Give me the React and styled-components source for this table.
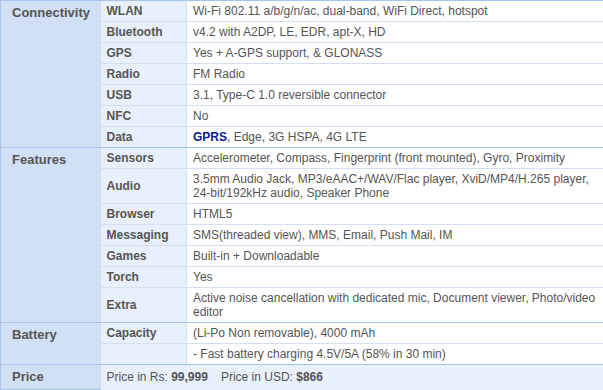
import React from "react";
import styled, { createGlobalStyle } from "styled-components";

const Global = createGlobalStyle`
  html, body { margin: 0; padding: 0; background: #ffffff; overflow: hidden; }
  body { font-family: "Liberation Sans", Arial, sans-serif; }
`;

const GROUP_LINE = "#a9c4ec";
const ROW_LINE = "#d3e0f3";

const Table = styled.table`
  border-collapse: collapse;
  table-layout: fixed;
  width: 610px;
  border-top: 1px solid ${GROUP_LINE};
  border-left: 1px solid ${GROUP_LINE};
  color: #545454;
`;

const CatCell = styled.th`
  background: #d1e0f4;
  text-align: left;
  vertical-align: top;
  font-size: 13px;
  font-weight: bold;
  line-height: 16px;
  padding: 4px 6px 4px 11px;
  border-bottom: 1px solid ${GROUP_LINE};
  color: #555;
`;

const LabelCell = styled.td`
  background: #e8f0fb;
  font-size: 12px;
  font-weight: bold;
  line-height: 14px;
  padding: 3px 6px;
  border-bottom: 1px solid ${(p) => (p.$end ? GROUP_LINE : ROW_LINE)};
  color: #555;
`;

const ValueCell = styled.td`
  background: #ffffff;
  font-size: 12px;
  line-height: 14px;
  padding: 3px 4px 3px 6px;
  border-left: 1px solid ${ROW_LINE};
  border-bottom: 1px solid ${(p) => (p.$end ? GROUP_LINE : ROW_LINE)};
  color: #555;
`;

const PriceCell = styled.td`
  background: #e8f0fb;
  font-size: 12px;
  line-height: 14px;
  padding: 5px 6px;
  color: #555;
`;

const Strong = styled.b`
  font-weight: bold;
`;

const Link = styled.b`
  font-weight: bold;
  color: #0b1a8c;
`;

const Gap = styled.span`
  display: inline-block;
  width: 13px;
`;

const groups = [
  {
    name: "Connectivity",
    rows: [
      ["WLAN", "Wi-Fi 802.11 a/b/g/n/ac, dual-band, WiFi Direct, hotspot"],
      ["Bluetooth", "v4.2 with A2DP, LE, EDR, apt-X, HD"],
      ["GPS", "Yes + A-GPS support, & GLONASS"],
      ["Radio", "FM Radio"],
      ["USB", "3.1, Type-C 1.0 reversible connector"],
      ["NFC", "No"],
      ["Data", <><Link>GPRS</Link>, Edge, 3G HSPA, 4G LTE</>],
    ],
  },
  {
    name: "Features",
    rows: [
      ["Sensors", "Accelerometer, Compass, Fingerprint (front mounted), Gyro, Proximity"],
      ["Audio", "3.5mm Audio Jack, MP3/eAAC+/WAV/Flac player, XviD/MP4/H.265 player, 24-bit/192kHz audio, Speaker Phone"],
      ["Browser", "HTML5"],
      ["Messaging", "SMS(threaded view), MMS, Email, Push Mail, IM"],
      ["Games", "Built-in + Downloadable"],
      ["Torch", "Yes"],
      ["Extra", "Active noise cancellation with dedicated mic, Document viewer, Photo/video editor"],
    ],
  },
  {
    name: "Battery",
    rows: [
      ["Capacity", "(Li-Po Non removable), 4000 mAh"],
      ["", "- Fast battery charging 4.5V/5A (58% in 30 min)"],
    ],
  },
];

export default function App() {
  return (
    <>
      <Global />
      <Table>
        <colgroup>
          <col style={{ width: "100px" }} />
          <col style={{ width: "86px" }} />
          <col />
        </colgroup>
        <tbody>
          {groups.map((g) =>
            g.rows.map((r, i) => {
              const end = i === g.rows.length - 1;
              return (
                <tr key={g.name + i}>
                  {i === 0 && <CatCell rowSpan={g.rows.length}>{g.name}</CatCell>}
                  <LabelCell $end={end}>{r[0]}</LabelCell>
                  <ValueCell $end={end}>{r[1]}</ValueCell>
                </tr>
              );
            })
          )}
          <tr>
            <CatCell>Price</CatCell>
            <PriceCell colSpan={2}>
              Price in Rs: <Strong>99,999</Strong>
              <Gap />
              Price in USD: <Strong>$866</Strong>
            </PriceCell>
          </tr>
        </tbody>
      </Table>
    </>
  );
}
